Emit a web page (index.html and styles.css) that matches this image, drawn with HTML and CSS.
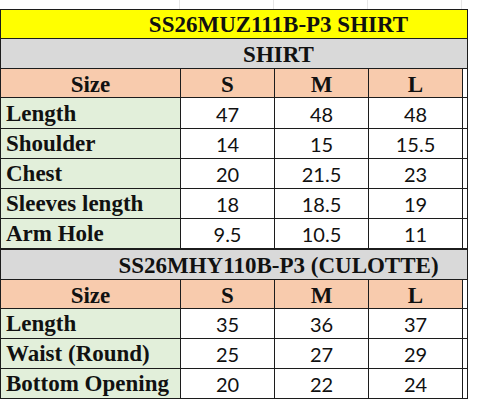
FILE: index.html
```html
<!DOCTYPE html>
<html>
<head>
<meta charset="utf-8">
<link rel="stylesheet" href="styles.css">
</head>
<body>
<div class="page">
  <div class="topstrip">
    <span class="tc c1"></span><span class="tc"></span><span class="tc"></span><span class="tc"></span><span class="tc end"></span>
  </div>
  <div class="sheet">
    <div class="cell title span">SS26MUZ111B-P3 SHIRT</div>
    <div class="cell section span">SHIRT</div>

    <div class="cell head">Size</div>
    <div class="cell head">S</div>
    <div class="cell head">M</div>
    <div class="cell head">L</div>
    <div class="cell pad"></div>

    <div class="cell label">Length</div><div class="cell num">47</div><div class="cell num">48</div><div class="cell num">48</div><div class="cell pad"></div>
    <div class="cell label">Shoulder</div><div class="cell num">14</div><div class="cell num">15</div><div class="cell num">15.5</div><div class="cell pad"></div>
    <div class="cell label">Chest</div><div class="cell num">20</div><div class="cell num">21.5</div><div class="cell num">23</div><div class="cell pad"></div>
    <div class="cell label">Sleeves length</div><div class="cell num">18</div><div class="cell num">18.5</div><div class="cell num">19</div><div class="cell pad"></div>
    <div class="cell label">Arm Hole</div><div class="cell num">9.5</div><div class="cell num">10.5</div><div class="cell num">11</div><div class="cell pad"></div>

    <div class="cell section span thick">SS26MHY110B-P3 (CULOTTE)</div>

    <div class="cell head">Size</div>
    <div class="cell head">S</div>
    <div class="cell head">M</div>
    <div class="cell head">L</div>
    <div class="cell pad"></div>

    <div class="cell label">Length</div><div class="cell num">35</div><div class="cell num">36</div><div class="cell num">37</div><div class="cell pad"></div>
    <div class="cell label">Waist (Round)</div><div class="cell num">25</div><div class="cell num">27</div><div class="cell num">29</div><div class="cell pad"></div>
    <div class="cell label">Bottom Opening</div><div class="cell num">20</div><div class="cell num">22</div><div class="cell num">24</div><div class="cell pad"></div>
  </div>
</div>
</body>
</html>
```
FILE: styles.css
```css
html, body {
  margin: 0;
  padding: 0;
  background: #ffffff;
}

.page {
  width: 480px;
  height: 412px;
  background: #ffffff;
}

.topstrip {
  display: grid;
  grid-template-columns: 180px 94px 94px 94px 18px;
  height: 9px;
}

.tc {
  border-right: 1px solid #e6e6e6;
}

.tc.end {
  border-right: none;
}

.sheet {
  display: grid;
  width: 467px;
  grid-template-columns: 179px 93px 93px 93px 4px;
  grid-template-rows: 28px 29px 28px 30px 29px 29px 29px 29px 30px 28px 29px 29px 29px;
  gap: 1px;
  background: #1c1c1c;
  border-top: 1px solid #1c1c1c;
  border-left: 1px solid #1c1c1c;
  border-bottom: 1px solid #1c1c1c;
}

.cell {
  display: flex;
  align-items: flex-end;
  justify-content: center;
  background: #ffffff;
  color: #111111;
  overflow: hidden;
  white-space: nowrap;
}

.span {
  grid-column: 1 / -1;
}

.title {
  background: #ffff00;
  font-family: "Liberation Serif", "Times New Roman", serif;
  font-weight: bold;
  font-size: 23px;
  line-height: 23px;
  padding-left: 89px;
  padding-bottom: 2px;
}

.section {
  background: #d9d9d9;
  font-family: "Liberation Serif", "Times New Roman", serif;
  font-weight: bold;
  font-size: 23px;
  line-height: 23px;
  padding-left: 89px;
  padding-bottom: 2px;
}

.section.thick {
  border-top: 1px solid #1c1c1c;
}

.head {
  background: #f8cbad;
  font-family: "Liberation Serif", "Times New Roman", serif;
  font-weight: bold;
  font-size: 23px;
  line-height: 23px;
  padding-bottom: 1px;
}

.head:first-child {
  padding-left: 2px;
}

.label {
  background: #e2efda;
  justify-content: flex-start;
  font-family: "Liberation Serif", "Times New Roman", serif;
  font-weight: bold;
  font-size: 23px;
  line-height: 23px;
  padding-left: 5px;
  padding-bottom: 3px;
}

.num {
  font-family: Lato, "Liberation Sans", sans-serif;
  font-size: 20px;
  line-height: 20px;
  padding-bottom: 4px;
}

.pad {
  background: #ffffff;
}
```
